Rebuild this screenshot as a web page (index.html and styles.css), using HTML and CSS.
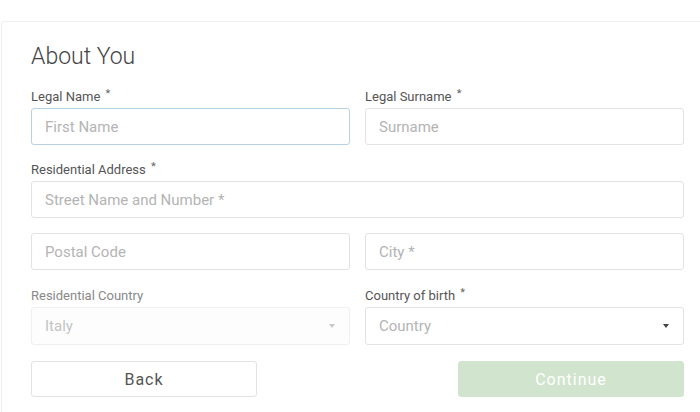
FILE: index.html
```html
<!DOCTYPE html>
<html lang="en">
<head>
  <meta charset="UTF-8">
  <meta name="viewport" content="width=device-width, initial-scale=1.0">
  <title>About You</title>
  <link rel="stylesheet" href="styles.css">
</head>
<body>
  <div class="card">
    <h1 class="card-title">About You</h1>

    <form class="about-form">
      <div class="row">
        <div class="field">
          <label class="field-label" for="firstName">Legal Name <span class="req">*</span></label>
          <input class="input is-focused" id="firstName" type="text" placeholder="First Name">
        </div>
        <div class="field">
          <label class="field-label" for="surname">Legal Surname <span class="req">*</span></label>
          <input class="input" id="surname" type="text" placeholder="Surname">
        </div>
      </div>

      <div class="row row-single row-address">
        <div class="field">
          <label class="field-label" for="street">Residential Address <span class="req">*</span></label>
          <input class="input" id="street" type="text" placeholder="Street Name and Number *">
        </div>
      </div>

      <div class="row row-tight">
        <div class="field">
          <input class="input" type="text" placeholder="Postal Code">
        </div>
        <div class="field">
          <input class="input" type="text" placeholder="City *">
        </div>
      </div>

      <div class="row row-country">
        <div class="field">
          <label class="field-label muted">Residential Country</label>
          <div class="select-wrap is-disabled">
            <select class="select" disabled>
              <option>Italy</option>
            </select>
          </div>
        </div>
        <div class="field">
          <label class="field-label">Country of birth <span class="req">*</span></label>
          <div class="select-wrap">
            <select class="select is-placeholder">
              <option>Country</option>
            </select>
          </div>
        </div>
      </div>

      <div class="actions">
        <button type="button" class="btn btn-back">Back</button>
        <button type="button" class="btn btn-continue" disabled>Continue</button>
      </div>
    </form>
  </div>
</body>
</html>
```

FILE: styles.css
```css
* {
  margin: 0;
  padding: 0;
  box-sizing: border-box;
}

body {
  font-family: Roboto, 'Liberation Sans', sans-serif;
  background: #fff;
  color: #555;
  overflow: hidden;
}

.card {
  margin: 21px 0 0 1px;
  width: 713px;
  padding: 20px 29px 30px;
  border: 1px solid #efefef;
  border-radius: 3px;
  background: #fff;
}

.card-title {
  font-size: 23px;
  font-weight: 300;
  line-height: 30px;
  color: #444;
  margin-bottom: 17px;
}

.row {
  display: grid;
  grid-template-columns: 319px 319px;
  column-gap: 15px;
}

.row-single {
  grid-template-columns: 653px;
}

.row-address {
  margin-top: 17px;
}

.row-tight {
  margin-top: 15px;
}

.row-country {
  margin-top: 18px;
}

.field-label {
  display: block;
  font-size: 13px;
  line-height: 16px;
  color: #555;
  margin-bottom: 3px;
}

.field-label.muted {
  color: #888;
}

.req {
  font-size: 11px;
  vertical-align: top;
  position: relative;
  top: -3px;
  margin-left: 2px;
  color: #666;
}

.input,
.select {
  display: block;
  width: 100%;
  height: 37px;
  padding: 0 13px;
  border: 1px solid #e3e3e3;
  border-radius: 3px;
  background: #fff;
  font-family: inherit;
  font-size: 15px;
  color: #444;
  outline: none;
}

.input::placeholder {
  color: #b4b4b4;
}

.input.is-focused {
  border-color: #b7d2e6;
}

.select-wrap {
  position: relative;
}

.select {
  height: 38px;
  appearance: none;
  -webkit-appearance: none;
}

.select.is-placeholder {
  color: #b4b4b4;
}

.select-wrap::after {
  content: "";
  position: absolute;
  right: 15px;
  top: 17px;
  border-left: 3px solid transparent;
  border-right: 3px solid transparent;
  border-top: 4px solid #444;
}

.select-wrap.is-disabled .select {
  color: #c4c4c4;
  border-color: #f0f0f0;
  background: #fdfdfd;
  opacity: 1;
}

.select-wrap.is-disabled::after {
  border-top-color: #c8c8c8;
}

.actions {
  display: flex;
  justify-content: space-between;
  margin-top: 16px;
}

.btn {
  width: 226px;
  height: 36px;
  border-radius: 3px;
  font-family: inherit;
  font-size: 16px;
  letter-spacing: 1px;
  cursor: pointer;
}

.btn-back {
  background: #fff;
  border: 1px solid #e3e3e3;
  color: #555;
}

.btn-continue {
  background: #d1e4cd;
  border: 1px solid #d1e4cd;
  color: #fff;
}
```
